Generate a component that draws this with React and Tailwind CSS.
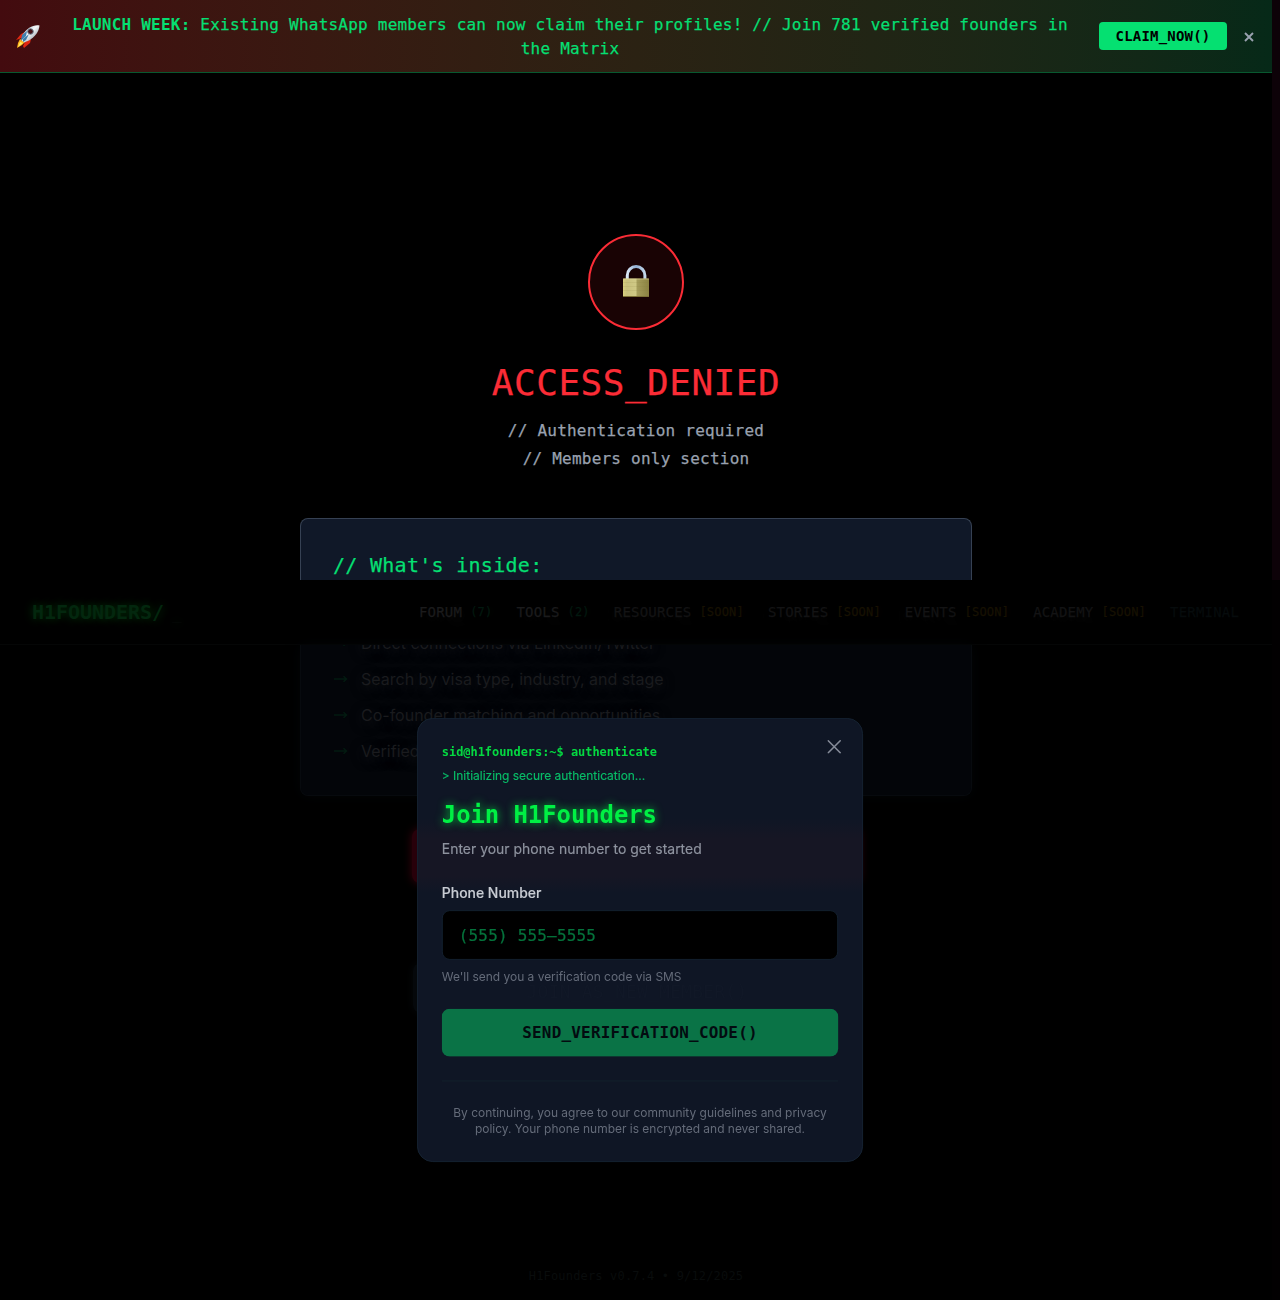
import React from "react";

const mono = "font-['DejaVu_Sans_Mono',monospace] tracking-[0.014em]";
const monoTight = "font-['DejaVu_Sans_Mono',monospace] tracking-[-0.002em]";
const stroke = "[-webkit-text-stroke:0.25px_currentColor]";

function Rocket() {
  return (
    <svg width="26" height="26" viewBox="0 0 26 26" className="-ml-px shrink-0">
      <defs>
        <linearGradient id="hull" x1="0" y1="0" x2="1" y2="1">
          <stop offset="0" stopColor="#8ea9bd" />
          <stop offset="0.45" stopColor="#f4f7f9" />
          <stop offset="1" stopColor="#66727e" />
        </linearGradient>
      </defs>
      <path d="M6 11 L10 9 L9 14 L4 16 L1 17 Z" fill="#e02812" />
      <path d="M10 19 L16 16 L15 20 L9 25 L8 23 Z" fill="#e02812" />
      <path d="M5 16 L10 19 L7 22 L2 25 L3 20 Z" fill="#ffb31a" />
      <path d="M5 19 L8 20 L3 24 Z" fill="#fff06a" />
      <path d="M24.5 2.5 C18 1.5 12 5 7.5 12 L6.5 17 L9 19.5 L14 17.5 C20 13.5 24 9 24.5 2.5 Z" fill="url(#hull)" />
      <path d="M7 12 L12 8 L11 13 L6 18 Z" fill="#3f7fae" />
      <circle cx="15.5" cy="8.5" r="2.8" fill="#471218" stroke="#6f8493" />
      <path d="M8 16 L14 11 L11 17 L8 19 Z" fill="#397ba8" />
    </svg>
  );
}

function Lock() {
  return (
    <svg width="28" height="34" viewBox="0 0 28 34" className="-mt-0.5">
      <defs>
        <linearGradient id="brass" x1="0" y1="0" x2="1" y2="0">
          <stop offset="0" stopColor="#d8cf7d" />
          <stop offset="0.15" stopColor="#c9c17d" />
          <stop offset="0.5" stopColor="#cfc985" />
          <stop offset="0.54" stopColor="#a59d5b" />
          <stop offset="1" stopColor="#8b8242" />
        </linearGradient>
        <linearGradient id="steel" x1="0" y1="0" x2="1" y2="0">
          <stop offset="0" stopColor="#d8e7f5" />
          <stop offset="0.5" stopColor="#8faed2" />
          <stop offset="1" stopColor="#c4d8ea" />
        </linearGradient>
      </defs>
      <path d="M5.3 16 V11.5 a8.8 9 0 0 1 17.6 0 V16" fill="none" stroke="url(#steel)" strokeWidth="3" />
      <rect x="1" y="14.5" width="26" height="18.5" rx="0.8" fill="url(#brass)" />
      <path d="M1 15 H27" stroke="#e0da9a" strokeOpacity="0.6" />
      <path d="M1 18.5 H27 M1 22.5 H27 M1 26.5 H27" stroke="#82783b" strokeOpacity="0.12" />
      <path d="M1 32.5 H27" stroke="#7d7137" />
    </svg>
  );
}

function Banner() {
  return (
    <div className="flex h-[73px] items-center border-b border-[#08582f] bg-linear-to-r from-[#430b0f] via-[#2b2213] to-[#062918] px-4">
      <Rocket />
      <p className={`${mono} ml-4 w-[1026px] pt-0.5 text-center text-base leading-6 text-[#05df72]`}>
        <span className="font-bold">LAUNCH WEEK:</span><span className={stroke}> Existing WhatsApp members can now claim their profiles! // Join 781 verified founders in<br />the Matrix</span>
      </p>
      <button className={`${mono} ml-4 h-7 w-32 shrink-0 rounded bg-[#05e071] text-sm font-bold text-black`}>CLAIM_NOW()</button>
      <svg width="10" height="10" viewBox="0 0 10 10" className="ml-[17px] mt-0.5 shrink-0">
        <path d="M1 1 9 9M9 1 1 9" stroke="#99a1af" strokeWidth="1.9" />
      </svg>
    </div>
  );
}

const navItems = [
  { name: "FORUM", tag: "(7)", tone: "text-[#1b1b1c]", tagTone: "text-[#02180f]" },
  { name: "TOOLS", tag: "(2)", tone: "text-[#1b1b1c]", tagTone: "text-[#02180f]" },
  { name: "RESOURCES", tag: "[SOON]", tone: "text-[#131314]", tagTone: "text-[#171102]" },
  { name: "STORIES", tag: "[SOON]", tone: "text-[#131314]", tagTone: "text-[#171102]" },
  { name: "EVENTS", tag: "[SOON]", tone: "text-[#131314]", tagTone: "text-[#171102]" },
  { name: "ACADEMY", tag: "[SOON]", tone: "text-[#131314]", tagTone: "text-[#171102]" },
];

function Nav() {
  return (
    <nav className="flex h-[65px] items-center border-b border-[#050606] bg-black pl-8">
      <div className={`${monoTight} w-[387px] text-xl font-bold text-[#03270e] [text-shadow:0_0_10px_#003b0c]`}>
        H1FOUNDERS/<span className="ml-2 text-base font-normal text-[#070a08]">_</span>
      </div>
      <div className={`${mono} ${stroke} flex items-center gap-6 text-sm whitespace-nowrap`}>
        {navItems.map((n) => (
          <div key={n.name} className="flex items-center gap-2">
            <span className={`${n.tone} [text-shadow:0_4px_14px_#191919]`}>{n.name}</span>
            <span className={`${n.tagTone} text-xs [text-shadow:0_0_12px_currentColor]`}>{n.tag}</span>
          </div>
        ))}
        <span className="text-[#060b0c] [text-shadow:0_0_10px_#050808]">TERMINAL</span>
      </div>
    </nav>
  );
}

const features = [
  "Direct connections via LinkedIn/Twitter",
  "Search by visa type, industry, and stage",
  "Co-founder matching and opportunities",
  "Verified",
];

function AuthModal() {
  return (
    <div className="absolute top-[717px] left-[416px] h-[446px] w-[448px] scale-[0.996] overflow-hidden rounded-2xl border border-[#152231] bg-[#0f1625] bg-[linear-gradient(to_bottom,transparent_100px,#161624_120px,#161624_158px,transparent_175px)] px-6 pt-6">
      <svg width="14" height="14" viewBox="0 0 14 14" className="absolute top-[21px] right-[21px]">
        <path d="M1 1 13 13M13 1 1 13" stroke="#858b98" strokeWidth="1.6" strokeLinecap="round" />
      </svg>
      <div className={`${monoTight} text-xs leading-[18px] font-bold text-[#04d941]`}>sid@h1founders:~$ authenticate</div>
      <div className="mt-1.5 text-xs leading-[18px] text-[#08bd68] [-webkit-text-stroke:0.15px_currentColor]">&gt; Initializing secure authentication...</div>
      <h2 className={`${monoTight} mt-[15px] text-2xl leading-8 font-bold text-[#00f044] [text-shadow:0_0_9px_#00c83b]`}>Join H1Founders</h2>
      <p className="mt-2 text-sm leading-5 text-[#8e939f] [-webkit-text-stroke:0.15px_currentColor]">Enter your phone number to get started</p>
      <label className="mt-6 block text-sm leading-5 font-medium text-[#c8ccd3] [-webkit-text-stroke:0.15px_currentColor]">Phone Number</label>
      <div className={`${mono} ${stroke} mt-[7px] flex h-[50px] items-center rounded-lg border border-[#13202e] bg-black pt-0.5 pl-4 text-base text-[#05733c]`}>(555) 555–5555</div>
      <p className="mt-[9px] text-xs leading-4 text-[#646b79]">We'll send you a verification code via SMS</p>
      <button className={`${mono} relative mt-6 h-12 w-full rounded-lg bg-[#0a7346] text-base font-bold text-[#030b10]`}>SEND_VERIFICATION_CODE()</button>
      <div className="mt-6 border-t border-[#13202c] pt-6 text-center text-xs leading-4 text-[#646b79]">
        By continuing, you agree to our community guidelines and privacy<br />policy. Your phone number is encrypted and never shared.
      </div>
      <div className={`${mono} pointer-events-none absolute top-[262px] left-0 w-[440px] text-center text-lg leading-6 text-[#111827]`}>JOIN_AS_NEW_MEMBER()</div>
    </div>
  );
}

export default function App() {
  return (
    <div className="relative flex h-[1300px] w-[1280px] overflow-hidden bg-black font-[Inter,sans-serif]">
      <div className="w-[1272px]">
        <div className="h-[580px] overflow-hidden">
          <Banner />
          <main className="flex flex-col items-center pt-[161px]">
            <div className="flex size-24 items-center justify-center rounded-full border-2 border-[#fb2c36] bg-[#190304]">
              <Lock />
            </div>
            <h1 className={`${mono} ${stroke} mt-[33px] text-4xl leading-10 text-[#fb2c36]`}>ACCESS_DENIED</h1>
            <div className={`${mono} ${stroke} mt-[14px] text-center text-base leading-7 text-[#99a1af]`}>
              // Authentication required<br />// Members only section
            </div>
            <section className="mt-[45px] h-[80px] w-[672px] rounded-t-lg border border-b-0 border-[#364153] bg-[#101828] px-[33px] pt-8">
              <h2 className={`${mono} ${stroke} -ml-px text-xl leading-7 text-[#05df72]`}>// What's inside:</h2>
            </section>
          </main>
        </div>
        <div className="flex h-[720px] flex-col">
          <Nav />
          <div className="h-[151px] w-[672px] self-center overflow-hidden rounded-b-lg border border-t-0 border-[#070a0e] bg-[#030509] px-[33px] shadow-[0_0_14px_#030507]">
            <ul className="-mt-[14px] flex flex-col gap-3">
              {features.map((f) => (
                <li key={f} className="flex h-6 items-center text-base text-[#1a1b1e] [text-shadow:0_3px_12px_#19191c]">
                  <svg width="14" height="8" viewBox="0 0 14 8" className="mr-[13px]">
                    <path d="M0 4H12M9.5 1.2 12.5 4 9.5 6.8" fill="none" stroke="#031a10" strokeWidth="1.5" />
                  </svg>
                  {f}
                </li>
              ))}
            </ul>
          </div>
          <div className="mt-[33px] h-[54px] w-[448px] self-center rounded-lg bg-[#28000a] shadow-[0_0_10px_#3a000d]" />
          <div className="mt-[80px] h-[50px] w-[446px] self-center rounded-lg bg-[#05080b] shadow-[0_0_10px_#06090b]" />
          <footer className={`${mono} mt-auto pb-4 text-center text-xs leading-4 text-[#090c0c] [text-shadow:0_0_8px_#050606]`}>H1Founders v0.7.4 • 9/12/2025</footer>
        </div>
      </div>
      <div className="flex w-2 flex-col">
        <div className="h-[580px] bg-[#0d0208]" />
        <div className="flex-1 bg-[#020001]" />
      </div>
      <AuthModal />
    </div>
  );
}
